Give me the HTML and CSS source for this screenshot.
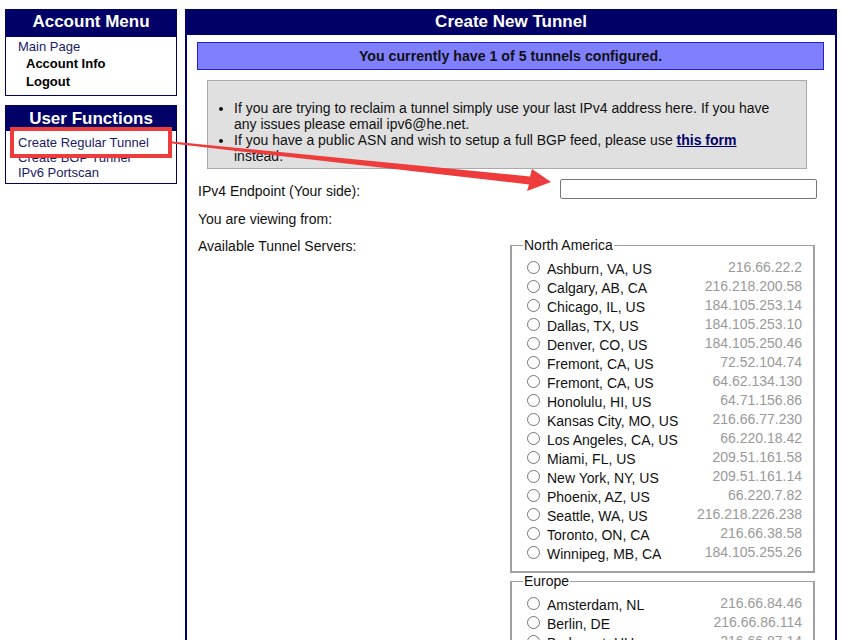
FILE: index.html
```html
<!DOCTYPE html>
<html>
<head>
<meta charset="utf-8">
<link rel="stylesheet" href="styles.css">
</head>
<body>
<div class="page">
  <aside class="sidebar">
    <section class="menu">
      <h2 class="menu-title">Account Menu</h2>
      <div class="menu-body">
        <a class="menu-link" href="#">Main Page</a>
        <a class="menu-sub" href="#">Account Info</a>
        <a class="menu-sub" href="#">Logout</a>
      </div>
    </section>
    <section class="menu menu-funcs">
      <h2 class="menu-title short">User Functions</h2>
      <div class="menu-body tight">
        <a class="menu-link front" href="#">Create Regular Tunnel</a>
        <a class="menu-link" href="#">Create BGP Tunnel</a>
        <a class="menu-link" href="#">IPv6 Portscan</a>
      </div>
      <div class="highlight"></div>
    </section>
  </aside>

  <main class="panel">
    <h1 class="panel-title">Create New Tunnel</h1>
    <div class="notice">You currently have 1 of 5 tunnels configured.</div>
    <div class="info">
      <ul>
        <li>If you are trying to reclaim a tunnel simply use your last IPv4 address here. If you have any issues please email ipv6@he.net.</li>
        <li>If you have a public ASN and wish to setup a full BGP feed, please use <a href="#">this form</a> instead.</li>
      </ul>
    </div>
    <div class="row endpoint">
      <label>IPv4 Endpoint (Your side):</label>
      <input class="ip-input" type="text">
    </div>
    <div class="row">You are viewing from:</div>
    <div class="servers">
      <div class="servers-label">Available Tunnel Servers:</div>
      <div class="regions">
        <fieldset class="region">
          <legend>North America</legend>
          <label class="srv"><input type="radio" name="s"><span class="city">Ashburn, VA, US</span><span class="ip">216.66.22.2</span></label>
          <label class="srv"><input type="radio" name="s"><span class="city">Calgary, AB, CA</span><span class="ip">216.218.200.58</span></label>
          <label class="srv"><input type="radio" name="s"><span class="city">Chicago, IL, US</span><span class="ip">184.105.253.14</span></label>
          <label class="srv"><input type="radio" name="s"><span class="city">Dallas, TX, US</span><span class="ip">184.105.253.10</span></label>
          <label class="srv"><input type="radio" name="s"><span class="city">Denver, CO, US</span><span class="ip">184.105.250.46</span></label>
          <label class="srv"><input type="radio" name="s"><span class="city">Fremont, CA, US</span><span class="ip">72.52.104.74</span></label>
          <label class="srv"><input type="radio" name="s"><span class="city">Fremont, CA, US</span><span class="ip">64.62.134.130</span></label>
          <label class="srv"><input type="radio" name="s"><span class="city">Honolulu, HI, US</span><span class="ip">64.71.156.86</span></label>
          <label class="srv"><input type="radio" name="s"><span class="city">Kansas City, MO, US</span><span class="ip">216.66.77.230</span></label>
          <label class="srv"><input type="radio" name="s"><span class="city">Los Angeles, CA, US</span><span class="ip">66.220.18.42</span></label>
          <label class="srv"><input type="radio" name="s"><span class="city">Miami, FL, US</span><span class="ip">209.51.161.58</span></label>
          <label class="srv"><input type="radio" name="s"><span class="city">New York, NY, US</span><span class="ip">209.51.161.14</span></label>
          <label class="srv"><input type="radio" name="s"><span class="city">Phoenix, AZ, US</span><span class="ip">66.220.7.82</span></label>
          <label class="srv"><input type="radio" name="s"><span class="city">Seattle, WA, US</span><span class="ip">216.218.226.238</span></label>
          <label class="srv"><input type="radio" name="s"><span class="city">Toronto, ON, CA</span><span class="ip">216.66.38.58</span></label>
          <label class="srv"><input type="radio" name="s"><span class="city">Winnipeg, MB, CA</span><span class="ip">184.105.255.26</span></label>
        </fieldset>
        <fieldset class="region">
          <legend>Europe</legend>
          <label class="srv"><input type="radio" name="s"><span class="city">Amsterdam, NL</span><span class="ip">216.66.84.46</span></label>
          <label class="srv"><input type="radio" name="s"><span class="city">Berlin, DE</span><span class="ip">216.66.86.114</span></label>
          <label class="srv"><input type="radio" name="s"><span class="city">Budapest, HU</span><span class="ip">216.66.87.14</span></label>
        </fieldset>
      </div>
    </div>
  </main>
</div>
<svg class="arrow" width="844" height="640" viewBox="0 0 844 640">
  <polygon points="172,141.5 530,176.5 532,169 551,182 527,191 529,184.5 172,143.5" fill="#ee3b3b"/>
</svg>
</body>
</html>
```

FILE: styles.css
```css
html, body {
  margin: 0;
  padding: 0;
  background: #fff;
}
body {
  font-family: "Liberation Sans", Arial, sans-serif;
  font-size: 14px;
  color: #111;
  overflow: hidden;
  height: 640px;
}
.page {
  display: flex;
  align-items: flex-start;
  padding: 9px 0 0 5px;
}
.sidebar {
  width: 172px;
  display: flex;
  flex-direction: column;
  gap: 9px;
}
.menu {
  position: relative;
  border: 1px solid #000066;
  background: #fff;
}
.menu-title {
  margin: 0;
  height: 27px;
  line-height: 24px;
  background: #000066;
  color: #fff;
  font-size: 17px;
  font-weight: bold;
  text-align: center;
}
.menu-title.short {
  height: 25px;
  line-height: 25px;
}
.menu-body {
  display: flex;
  flex-direction: column;
  padding: 1px 0 4px 12px;
}
.menu-link {
  color: #1a1a66;
  text-decoration: none;
  font-size: 13px;
  line-height: 17px;
}
.menu-sub {
  color: #000;
  text-decoration: none;
  font-weight: bold;
  font-size: 13px;
  line-height: 18px;
  padding-left: 8px;
}
.menu-body.tight {
  padding-top: 4px;
  padding-bottom: 3px;
}
.menu-body.tight .menu-link {
  line-height: 15px;
}
.menu-funcs .front {
  position: relative;
  z-index: 3;
}
.highlight {
  position: absolute;
  left: 4px;
  top: 21px;
  width: 154px;
  height: 23px;
  border: 4px solid #ee3b3b;
  background: #fff;
  z-index: 2;
}

.panel {
  margin-left: 8px;
  width: 648px;
  height: 640px;
  border-left: 2px solid #000066;
  border-right: 2px solid #000066;
}
.panel-title {
  margin: 0;
  height: 26px;
  line-height: 25px;
  background: #000066;
  color: #fff;
  font-size: 17px;
  font-weight: bold;
  text-align: center;
}
.notice {
  margin: 7px 11px 0 10px;
  height: 26px;
  line-height: 27px;
  background: #8080ff;
  border: 1px solid #2222cc;
  text-align: center;
  font-weight: bold;
  font-size: 14.2px;
  color: #111;
}
.info {
  margin: 10px 28px 0 20px;
  height: 87px;
  background: #e0e0e0;
  border: 1px solid #aaa;
}
.info ul {
  margin: 19px 0 0 0;
  padding: 0 24px 0 26px;
  line-height: 16px;
}
.info a {
  color: #000066;
  font-weight: bold;
}
.row {
  padding-left: 11px;
  line-height: 16px;
}
.endpoint {
  display: flex;
  justify-content: space-between;
  align-items: center;
  margin-top: 10px;
  padding-right: 18px;
}
.endpoint label {
  margin-top: 3px;
}
.ip-input {
  width: 257px;
  height: 20px;
  margin: 0;
  padding: 0;
  box-sizing: border-box;
  border: 1px solid #767676;
  border-radius: 2px;
}
.row:not(.endpoint) {
  margin-top: 12px;
}
.servers {
  display: flex;
  padding-left: 11px;
  margin-top: 10px;
}
.servers-label {
  width: 312px;
  line-height: 16px;
  margin-top: 1px;
}
.regions {
  display: flex;
  flex-direction: column;
}
.region {
  width: 277px;
  margin: 0;
  padding: 5px 11px 9px 13px;
  border-color: #a0a0a0;
  border-style: solid;
  border-width: 2px;
  border-top-width: 1px;
}
.region + .region {
  margin-top: 0;
}
.region legend {
  padding: 0 1px;
  margin-left: -2px;
  line-height: 16px;
  font-size: 14px;
  color: #111;
}
.srv {
  display: flex;
  align-items: center;
  height: 19px;
}
.srv input {
  width: 13px;
  height: 13px;
  margin: 0 7px 0 2px;
  flex: none;
}
.city {
  flex: 1;
  margin-top: 2px;
}
.ip {
  color: #999;
  margin-top: -2px;
}
.arrow {
  position: absolute;
  left: 0;
  top: 0;
  pointer-events: none;
  z-index: 5;
}
```
